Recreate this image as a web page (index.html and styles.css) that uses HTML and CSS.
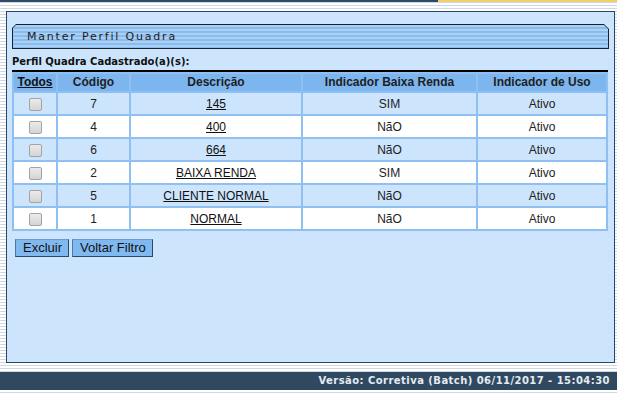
FILE: index.html
```html
<!DOCTYPE html>
<html lang="pt">
<head>
<meta charset="utf-8">
<title>Manter Perfil Quadra</title>
<link rel="stylesheet" href="styles.css">
</head>
<body>
<div class="topbar"><div class="topbar-dark"></div><div class="topbar-yellow"></div></div>
<div class="panel">
  <div class="tab"><div class="tab-inner">Manter Perfil Quadra</div></div>
  <div class="subtitle">Perfil Quadra Cadastrado(a)(s):</div>
  <table class="grid">
    <colgroup>
      <col class="c1"><col class="c2"><col class="c3"><col class="c4"><col class="c5">
    </colgroup>
    <thead>
      <tr><th><a href="#" class="link">Todos</a></th><th>Código</th><th>Descrição</th><th>Indicador Baixa Renda</th><th>Indicador de Uso</th></tr>
    </thead>
    <tbody>
      <tr class="odd"><td><input type="checkbox" class="chk"></td><td>7</td><td><a href="#" class="link">145</a></td><td>SIM</td><td>Ativo</td></tr>
      <tr class="even"><td><input type="checkbox" class="chk"></td><td>4</td><td><a href="#" class="link">400</a></td><td>NãO</td><td>Ativo</td></tr>
      <tr class="odd"><td><input type="checkbox" class="chk"></td><td>6</td><td><a href="#" class="link">664</a></td><td>NãO</td><td>Ativo</td></tr>
      <tr class="even"><td><input type="checkbox" class="chk"></td><td>2</td><td><a href="#" class="link">BAIXA RENDA</a></td><td>SIM</td><td>Ativo</td></tr>
      <tr class="odd"><td><input type="checkbox" class="chk"></td><td>5</td><td><a href="#" class="link">CLIENTE NORMAL</a></td><td>NãO</td><td>Ativo</td></tr>
      <tr class="even"><td><input type="checkbox" class="chk"></td><td>1</td><td><a href="#" class="link">NORMAL</a></td><td>NãO</td><td>Ativo</td></tr>
    </tbody>
  </table>
  <div class="actions">
    <button class="btn">Excluir</button>
    <button class="btn">Voltar Filtro</button>
  </div>
</div>
<div class="footer">Versão: Corretiva (Batch) 06/11/2017 - 15:04:30</div>
</body>
</html>
```

FILE: styles.css
```css
html, body {
  margin: 0;
  padding: 0;
}
body {
  width: 617px;
  height: 393px;
  overflow: hidden;
  background: repeating-linear-gradient(#ffffff 0 2px, #cfd9e3 2px 3px);
  font-family: "Liberation Sans", Arial, sans-serif;
}
.topbar {
  display: flex;
  height: 2px;
}
.topbar-dark {
  width: 438px;
  background: #2f4a66;
}
.topbar-yellow {
  flex: 1;
  background: #f0d16a;
}
.panel {
  margin: 9px 2px 0 6px;
  height: 350px;
  border: 1px solid #2c4662;
  background: #cce5fd;
  display: flex;
  flex-direction: column;
}
.tab {
  margin: 12px 5px 0 5px;
  height: 25px;
  padding: 1px;
  box-sizing: border-box;
  background: #15222f;
  clip-path: polygon(4px 0, calc(100% - 5px) 0, 100% 5px, 100% 100%, 0 100%, 0 4px);
}
.tab-inner {
  height: 100%;
  box-sizing: border-box;
  background: repeating-linear-gradient(#a9d0f5 0 2px, #8bbaec 2px 4px);
  clip-path: polygon(3px 0, calc(100% - 4px) 0, 100% 4px, 100% 100%, 0 100%, 0 3px);
  padding-left: 14px;
  font-family: "DejaVu Sans", Verdana, sans-serif;
  font-size: 11px;
  letter-spacing: 1.8px;
  line-height: 23px;
  color: #222222;
}
.subtitle {
  margin: 6px 0 0 5px;
  font-family: "DejaVu Sans", Verdana, sans-serif;
  font-weight: bold;
  font-size: 10px;
  line-height: 13px;
  color: #111111;
}
.grid {
  margin: 2px 0 0 5px;
  width: 596px;
  table-layout: fixed;
  border-collapse: separate;
  border-spacing: 2px;
  border-top: 2px solid #000000;
  background: #8fc0f1;
  font-size: 12px;
  color: #222222;
}
.c1 { width: 42px; }
.c2 { width: 71px; }
.c3 { width: 170px; }
.c4 { width: 173px; }
.c5 { width: 128px; }
.grid th {
  background: #7db5ee;
  height: 17px;
  padding: 0;
  line-height: 17px;
  font-weight: bold;
  text-align: center;
  color: #1e1e1e;
}
.grid td {
  height: 21px;
  padding: 0;
  text-align: center;
}
.odd td { background: #cce5fd; }
.even td { background: #ffffff; }
.link {
  color: #111111;
  text-decoration: underline;
}
.chk {
  appearance: none;
  -webkit-appearance: none;
  margin: 0;
  width: 13px;
  height: 13px;
  border: 1px solid #a3a3a3;
  border-radius: 2px;
  background: linear-gradient(#ebebeb, #d4d4d4);
  vertical-align: middle;
}
.actions {
  display: flex;
  gap: 3px;
  margin: 8px 0 0 8px;
}
.btn {
  font-family: "Liberation Sans", Arial, sans-serif;
  font-size: 13px;
  line-height: 16px;
  padding: 0 6px 0 7px;
  margin: 0;
  background: #80b8f0;
  color: #111111;
  border: 1px solid #2a4868;
  border-top-color: #6a9ad0;
  border-left-color: #4a78a8;
  border-radius: 0;
}
.footer {
  margin-top: 9px;
  height: 18px;
  background: #304961;
  color: #e6ecf2;
  font-family: "DejaVu Sans", Verdana, sans-serif;
  font-weight: bold;
  font-size: 10px;
  letter-spacing: 0.45px;
  line-height: 18px;
  text-align: right;
  padding-right: 7px;
}
```
